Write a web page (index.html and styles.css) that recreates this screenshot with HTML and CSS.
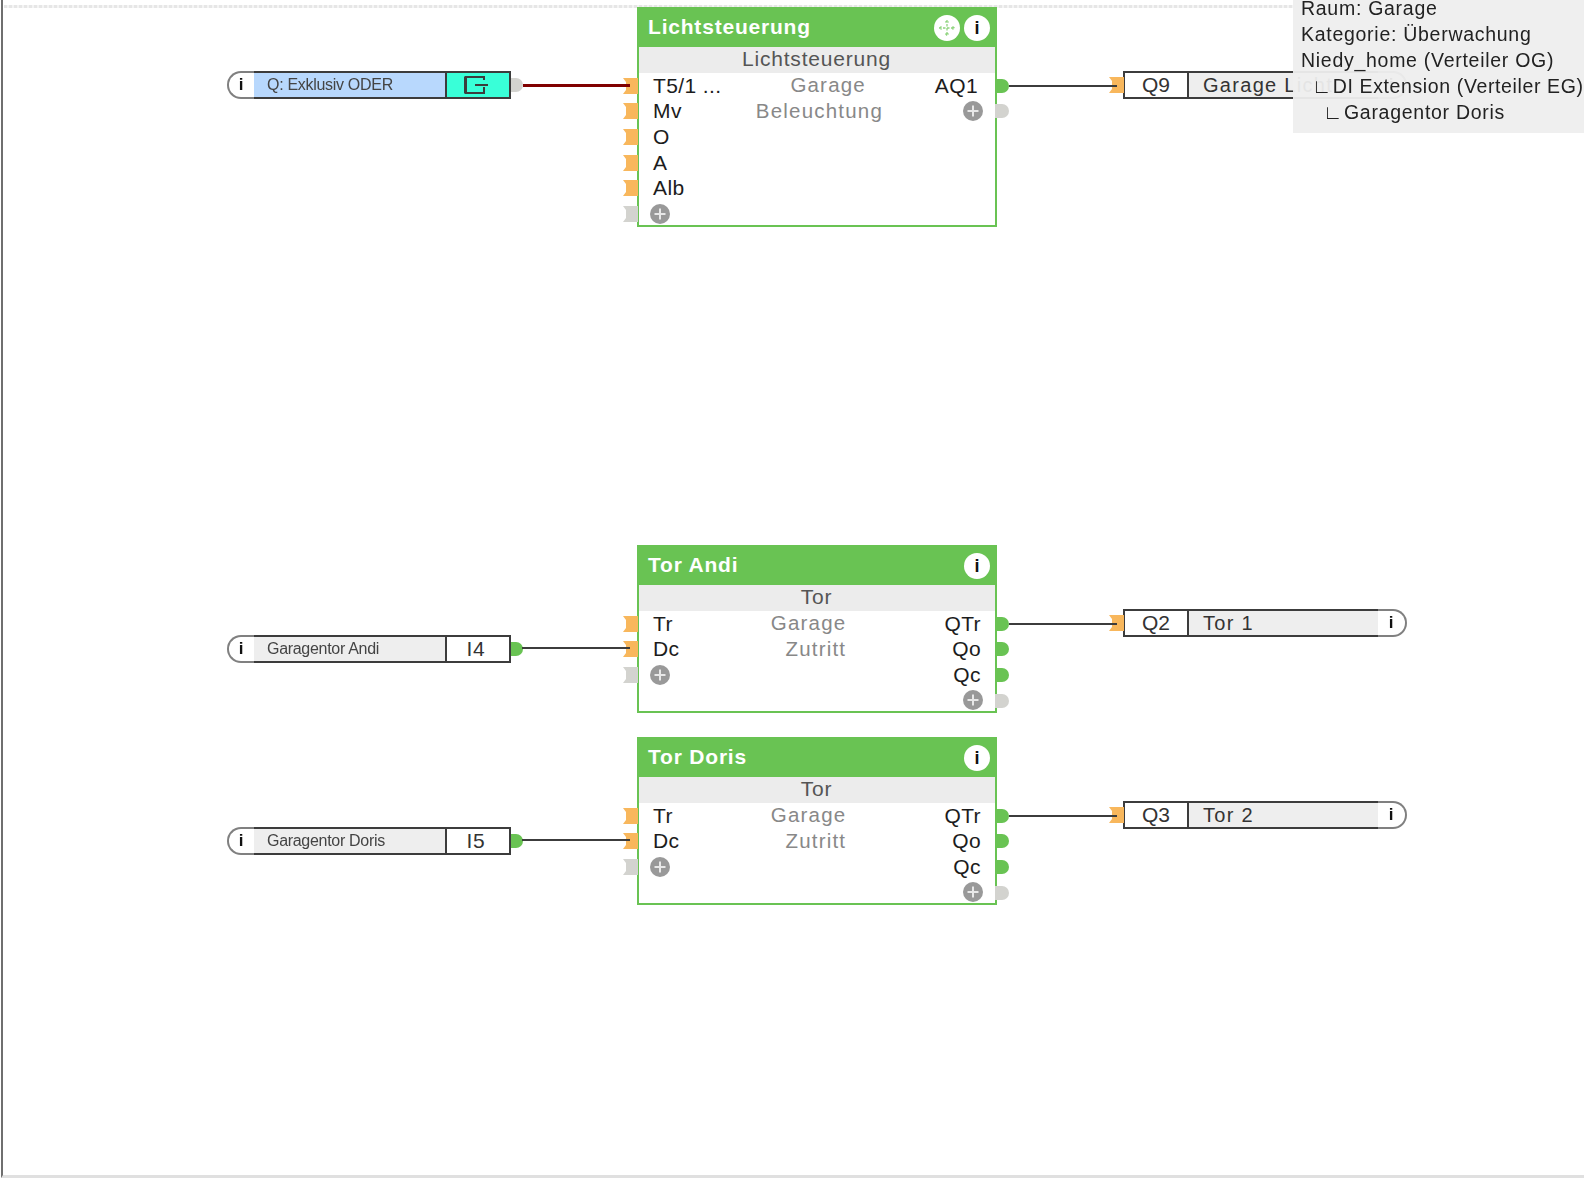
FILE: index.html
```html
<!DOCTYPE html>
<html lang="de">
<head>
<meta charset="utf-8">
<title>Garage</title>
<link rel="stylesheet" href="styles.css">
</head>
<body>
<svg class="defs" width="0" height="0" aria-hidden="true">
  <symbol id="plus" viewBox="0 0 20 20"><circle cx="10" cy="10" r="10" fill="#999"/><path d="M10 4.500v11M4.500 10h11" stroke="#e8e8e8" stroke-width="2" fill="none"/></symbol>
  <symbol id="port" viewBox="0 0 15 16"><path d="M0 0H15V16H0L3 12V4Z"/></symbol>
</svg>
<main class="canvas">
  <div class="dots"></div>

  <div class="pill in row-a"><span class="cap"><b>i</b></span><span class="name blue">Q: Exklusiv ODER</span><span class="val cyan"><svg width="26" height="20" viewBox="0 0 26 20"><path d="M21 5V2H2.500V18H21V12" fill="none" stroke="#3c3c3c" stroke-width="2"/><path d="M2.500 2V18" stroke="#3c3c3c" stroke-width="3"/><path d="M12 10H25" stroke="#3c3c3c" stroke-width="2"/></svg></span><i class="dot off"></i></div>
  <div class="wire red wire-a"></div>

  <section class="block top-a tall">
    <header class="head"><h2>Lichtsteuerung</h2><span class="move"><svg width="26" height="26" viewBox="0 0 26 26"><path d="M13 5v16M5 13h16M11.500 7.500l1.500-2 1.500 2M11.500 18.500l1.500 2 1.500-2M7.500 11.500l-2 1.500 2 1.500M18.500 11.500l2 1.500-2 1.500" fill="none" stroke="#8fd47e" stroke-width="1.300" stroke-dasharray="2.500 1.500"/></svg></span><span class="info">i</span></header>
    <div class="band">Lichtsteuerung</div>
    <div class="row"><svg class="port on"><use href="#port"/></svg><span class="lab">T5/1 ...</span><span class="mid">Garage</span><span class="lab r4">AQ1</span><i class="dot on"></i></div>
    <div class="row"><svg class="port on"><use href="#port"/></svg><span class="lab">Mv</span><span class="mid">Beleuchtung</span><svg class="add"><use href="#plus"/></svg><i class="dot off"></i></div>
    <div class="row"><svg class="port on"><use href="#port"/></svg><span class="lab">O</span></div>
    <div class="row"><svg class="port on"><use href="#port"/></svg><span class="lab">A</span></div>
    <div class="row"><svg class="port on"><use href="#port"/></svg><span class="lab">Alb</span></div>
    <div class="row"><svg class="port off"><use href="#port"/></svg><svg class="add left"><use href="#plus"/></svg></div>
  </section>
  <div class="wire wire-b"></div>

  <div class="pill out row-a"><svg class="port on"><use href="#port"/></svg><span class="val">Q9</span><span class="name">Garage Licht</span><span class="cap"><b>i</b></span></div>

  <div class="pill in row-b"><span class="cap"><b>i</b></span><span class="name">Garagentor Andi</span><span class="val">I4</span><i class="dot on"></i></div>
  <div class="wire wire-c"></div>

  <section class="block top-b">
    <header class="head"><h2>Tor Andi</h2><span class="info">i</span></header>
    <div class="band">Tor</div>
    <div class="row"><svg class="port on"><use href="#port"/></svg><span class="lab">Tr</span><span class="mid">Garage</span><span class="lab">QTr</span><i class="dot on"></i></div>
    <div class="row"><svg class="port on"><use href="#port"/></svg><span class="lab">Dc</span><span class="mid">Zutritt</span><span class="lab">Qo</span><i class="dot on"></i></div>
    <div class="row"><svg class="port off"><use href="#port"/></svg><svg class="add left"><use href="#plus"/></svg><span class="mid"></span><span class="lab">Qc</span><i class="dot on"></i></div>
    <div class="row"><span class="mid"></span><svg class="add"><use href="#plus"/></svg><i class="dot off"></i></div>
  </section>
  <div class="wire wire-d"></div>
  <div class="pill out row-c"><svg class="port on"><use href="#port"/></svg><span class="val">Q2</span><span class="name">Tor 1</span><span class="cap"><b>i</b></span></div>

  <div class="pill in row-d"><span class="cap"><b>i</b></span><span class="name">Garagentor Doris</span><span class="val">I5</span><i class="dot on"></i></div>
  <div class="wire wire-e"></div>

  <section class="block top-c">
    <header class="head"><h2>Tor Doris</h2><span class="info">i</span></header>
    <div class="band">Tor</div>
    <div class="row"><svg class="port on"><use href="#port"/></svg><span class="lab">Tr</span><span class="mid">Garage</span><span class="lab">QTr</span><i class="dot on"></i></div>
    <div class="row"><svg class="port on"><use href="#port"/></svg><span class="lab">Dc</span><span class="mid">Zutritt</span><span class="lab">Qo</span><i class="dot on"></i></div>
    <div class="row"><svg class="port off"><use href="#port"/></svg><svg class="add left"><use href="#plus"/></svg><span class="mid"></span><span class="lab">Qc</span><i class="dot on"></i></div>
    <div class="row"><span class="mid"></span><svg class="add"><use href="#plus"/></svg><i class="dot off"></i></div>
  </section>
  <div class="wire wire-f"></div>
  <div class="pill out row-e"><svg class="port on"><use href="#port"/></svg><span class="val">Q3</span><span class="name">Tor 2</span><span class="cap"><b>i</b></span></div>

  <aside class="tip">
    <div>Raum: Garage</div>
    <div>Kategorie: Überwachung</div>
    <div>Niedy_home (Verteiler OG)</div>
    <div class="lv1"><span class="tick">∟</span> DI Extension (Verteiler EG)</div>
    <div class="lv2"><span class="tick">∟</span> Garagentor Doris</div>
  </aside>
</main>
</body>
</html>
```
FILE: styles.css
```css
* { box-sizing: border-box; }
html, body { margin: 0; height: 100%; background: #fff; overflow: hidden; }
body { font-family: "Liberation Sans", Arial, sans-serif; color: #1a1a1a; }
.defs { position: absolute; }

.canvas {
  position: relative;
  height: 1178px;
  margin-left: 1px;
  border-left: 2px solid #6f6f6f;
  border-bottom: 3px solid #e0e0e0;
  overflow: hidden;
  filter: blur(.35px);
}
.dots {
  position: absolute; left: 1px; top: 5px; width: 1290px; height: 3px;
  background: repeating-linear-gradient(90deg, #e6e6e6 0 3px, #f4f4f4 3px 5px);
}

/* free canvas: node positions (x is offset by the 3px frame) */
.pill { position: absolute; display: flex; height: 28px; }
.pill.in { left: 224px; width: 284px; }
.pill.out { left: 1120px; width: 284px; }
.row-a { top: 71px; }
.row-b { top: 635px; }
.row-d { top: 827px; }
.row-c { top: 609px; }
.row-e { top: 801px; }

.name, .val {
  display: flex; align-items: center;
  border-top: 2px solid #3c3c3c; border-bottom: 2px solid #3c3c3c;
}
.name { background: #eee; white-space: nowrap; overflow: hidden; }
.in .name { flex: 1; padding-left: 13px; font-size: 16px; letter-spacing: -.3px; color: #444; }
.out .name { flex: 1; padding-left: 14px; font-size: 20px; letter-spacing: 1.3px; color: #333; }
.blue { background: #b8d8fd; }
.cyan { background: #39ffd8; }
.val { justify-content: center; font-size: 21px; color: #333; background: #fff; }
.val.cyan { background: #39ffd8; }
.in .val { width: 66px; padding-right: 4px; letter-spacing: .8px; border-left: 2px solid #3c3c3c; border-right: 2px solid #3c3c3c; }
.out .val { width: 66px; border-left: 2px solid #3c3c3c; border-right: 2px solid #3c3c3c; }
.cap {
  display: flex; align-items: center; justify-content: center;
  width: 27px; background: #fff;
  border: 2px solid #808080; font-size: 17px; color: #111;
}
.in .cap { border-right: 0; border-radius: 14px 0 0 14px; padding-right: 1px; }
.out .cap { border-left: 0; border-radius: 0 14px 14px 0; width: 29px; padding-right: 1px; }

.dot {
  position: absolute; width: 14px; height: 14px; top: 50%; margin-top: -7px;
  right: -14px; border-radius: 0 7px 7px 0; background: #69c353;
}
.dot.off { background: #d3d3cf; }
.pill .dot { right: -12px; width: 12px; border-radius: 0 7px 7px 0; }

.port { position: absolute; width: 15px; height: 16px; left: -16px; top: 50%; margin-top: -8px; }
.port.on { fill: #f8b75c; }
.port.off { fill: #d3d3cf; }
.pill .port { left: -14px; }

.block {
  position: absolute; left: 634px; width: 360px; height: 168px;
  border: 2px solid #69c353; background: #fff;
}
.block.tall { height: 220px; }
.top-a { top: 7px; }
.top-b { top: 545px; }
.top-c { top: 737px; }

.head {
  display: flex; align-items: center; gap: 4px;
  height: 38px; margin: -2px -2px 0; padding: 2px 7px 0 11px;
  background: #69c353; color: #fff; box-sizing: content-box;
}
.head h2 { flex: 1; margin: 0 0 2px; font-size: 21px; font-weight: 700; letter-spacing: .8px; }
.info, .move {
  display: flex; align-items: center; justify-content: center;
  width: 26px; height: 26px; border-radius: 50%; background: #fff;
  color: #111; font-size: 18px; font-weight: 700;
}
.band {
  height: 26px; padding: 0 1px 2px 0; background: #ececec; color: #555;
  font-size: 21px; line-height: 24px; text-align: center; letter-spacing: .8px;
}
.row {
  position: relative; display: flex; align-items: center;
  height: 25.67px; padding: 0 14px; font-size: 21px;
}
.lab { color: #1c1c1c; white-space: nowrap; letter-spacing: .4px; }
.r4 { margin-right: 3px; }
.mid { flex: 1; margin-top: -1px; text-align: center; color: #888; font-size: 20.500px; letter-spacing: 1.2px; }
.add { width: 20px; height: 20px; margin: -1px -2px 0 6px; }
.add.left { margin: -1px 0 0 -3px; }

.wire { position: absolute; z-index: 1; height: 2px; background: #3c3c3c; }
.wire.red { height: 3px; background: #800000; }
.wire-a { left: 520px; width: 107px; top: 84px; }
.wire-b { left: 1006px; width: 108px; top: 85px; }
.wire-c { left: 519px; width: 108px; top: 647px; }
.wire-d { left: 1006px; width: 108px; top: 623px; }
.wire-e { left: 519px; width: 108px; top: 839px; }
.wire-f { left: 1006px; width: 108px; top: 815px; }

.tip {
  position: absolute; z-index: 2; left: 1290px; top: -5px; width: 294px; height: 138px;
  padding: 0 0 0 8px;
  background: rgba(238, 238, 238, .95);
  font-size: 19.500px; line-height: 26px; letter-spacing: .72px; color: #222; white-space: nowrap;
}
.lv1 { padding-left: 11px; letter-spacing: .62px; }
.lv2 { padding-left: 22px; }
.tick { margin-right: -5px; }
```
